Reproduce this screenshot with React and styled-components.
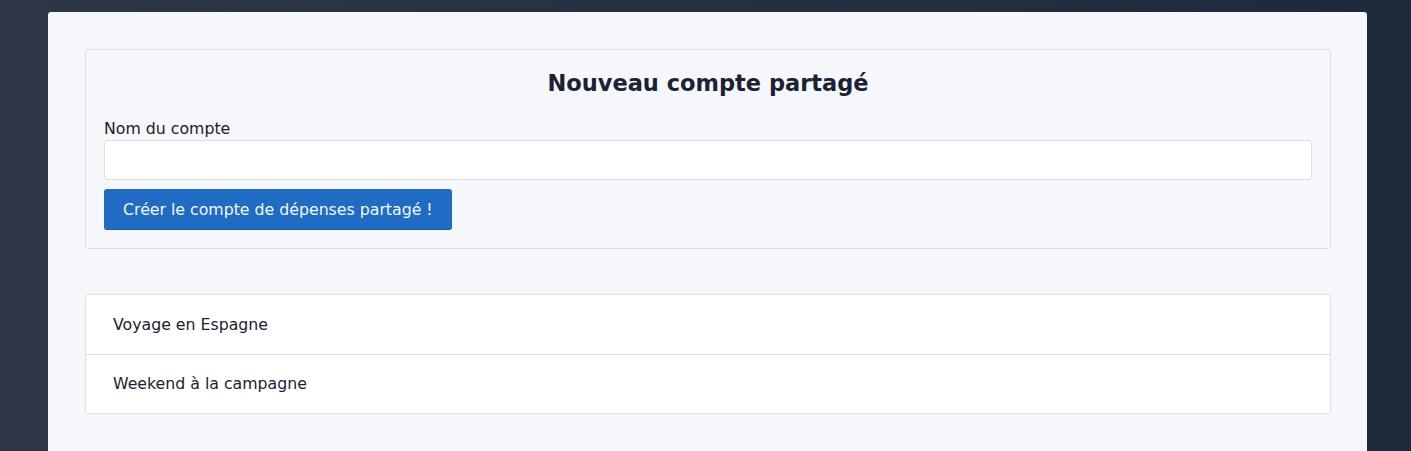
import styled, { createGlobalStyle } from "styled-components";

const GlobalStyle = createGlobalStyle`
  html, body {
    margin: 0;
    padding: 0;
  }
  body {
    min-height: 100vh;
    background: linear-gradient(90deg, #2d3748 0%, #1e293b 100%);
    font-family: "DejaVu Sans", "Liberation Sans", sans-serif;
    color: #1a202c;
  }
`;

const accounts = ["Voyage en Espagne", "Weekend à la campagne"];

function App() {
  return (
    <>
      <GlobalStyle />
      <Page>
        <Main>
          <FormCard>
            <Title>Nouveau compte partagé</Title>
            <Label htmlFor="name">Nom du compte</Label>
            <Input id="name" type="text" />
            <SubmitButton>Créer le compte de dépenses partagé !</SubmitButton>
          </FormCard>

          <AccountList>
            {accounts.map((name) => (
              <AccountItem key={name}>{name}</AccountItem>
            ))}
          </AccountList>
        </Main>
      </Page>
    </>
  );
}

const Page = styled.div`
  padding: 12px 44px 0 48px;
  min-height: 100vh;
  box-sizing: border-box;
`;

const Main = styled.main`
  background: #f6f7fb;
  border-radius: 3px;
  padding: 37px 36px 37px 37px;
  min-height: 500px;
  display: flex;
  flex-direction: column;
  gap: 45px;
`;

const FormCard = styled.section`
  border: 1px solid #dcdfe5;
  border-radius: 3px;
  padding: 18px;
  display: flex;
  flex-direction: column;
`;

const Title = styled.h2`
  margin: 2px 0 23px;
  text-align: center;
  font-size: 22.5px;
  font-weight: bold;
  color: #1a2233;
`;

const Label = styled.label`
  font-size: 15.75px;
  line-height: 20px;
  margin-bottom: 1px;
`;

const Input = styled.input`
  height: 40px;
  box-sizing: border-box;
  border: 1px solid #dcdfe5;
  border-radius: 4px;
  background: #ffffff;
  outline: none;
  padding: 0 10px;
  font-size: 15.75px;
  font-family: inherit;
`;

const SubmitButton = styled.button`
  align-self: flex-start;
  margin-top: 9px;
  height: 41px;
  padding: 0 19px;
  border: 0;
  border-bottom: 1px solid #1b5aa6;
  border-radius: 3px;
  background: #206bc4;
  color: #f4f7fb;
  font-family: inherit;
  font-size: 15.75px;
  cursor: pointer;
`;

const AccountList = styled.ul`
  list-style: none;
  margin: 0;
  padding: 0;
  background: #ffffff;
  border: 1px solid #dcdfe5;
  border-radius: 3px;
`;

const AccountItem = styled.li`
  padding: 0 27px;
  height: 58.5px;
  display: flex;
  align-items: center;
  font-size: 15.75px;
  color: #1a2233;

  & + & {
    border-top: 1px solid #dcdfe5;
  }
`;

export default App;
